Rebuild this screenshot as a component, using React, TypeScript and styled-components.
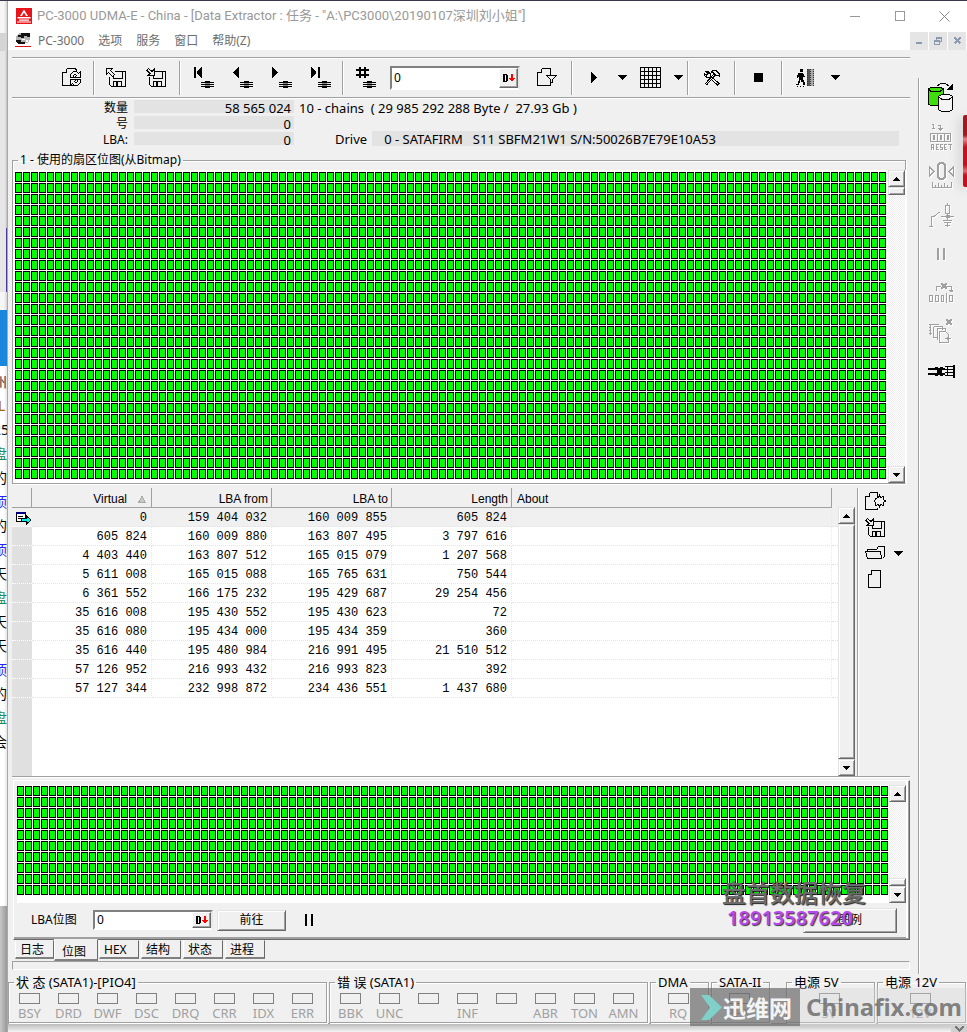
import React from "react";
import styled, { createGlobalStyle, css } from "styled-components";

const face = "#f0f0f0";
const edge = "#a0a0a0";
const dark = "#696969";

const GlobalStyle = createGlobalStyle`
  *, *::before, *::after { box-sizing: border-box; }
  body {
    margin: 0;
    background: ${face};
    color: #000;
    font: 12px/16px "Noto Sans", "Noto Sans CJK SC", sans-serif;
  }
  button, input { font: inherit; color: inherit; }
  svg { display: block; shape-rendering: crispEdges; overflow: visible; }
`;

const Desktop = styled.div`
  position: relative;
  display: flex;
  min-height: 100vh;
  overflow: hidden;
  border-top: 1px solid #38384c;
  background: linear-gradient(to top, #f4f4f4, #bcbcbc 8px, ${face} 8px);
`;

/* Window lying behind the application */
const Behind = styled.div`
  flex: none;
  width: 8px;
  overflow: hidden;
  border-right: 1px solid #a8a8a8;
  background: linear-gradient(to right, #f6f6f6 0 4px, #c9c9c9 8px);
  display: flex;
  flex-direction: column;
`;
const Stripe = styled.div<{ $h: number; $bg?: string }>`
  flex: none;
  height: ${(p) => p.$h}px;
  background: ${(p) => p.$bg || "transparent"};
`;
const Chat = styled.div`
  flex: none;
  height: 540px;
  padding-top: 4px;
  background: linear-gradient(to right, #fff 0 4px, #dcdcdc 8px);
`;
const ChatLine = styled.div<{ $c: string }>`
  height: 24px;
  margin-left: -7px;
  white-space: nowrap;
  font-size: 14px;
  line-height: 24px;
  color: ${(p) => p.$c};
`;

const Win = styled.div`
  flex: 1;
  min-width: 0;
  display: flex;
  flex-direction: column;
  align-self: flex-start;
  background: ${face};
  border-bottom: 1px solid ${edge};
`;

const TitleBar = styled.header`
  display: flex;
  align-items: center;
  height: 30px;
  padding-left: 8px;
  background: #fff;
  color: #999;
`;
const TitleText = styled.h1`
  flex: 1;
  margin: 0 0 0 5px;
  font: 400 13px/16px Roboto, "Noto Sans CJK SC", sans-serif;
  white-space: nowrap;
`;
const Caption = styled.button`
  display: grid;
  place-items: center;
  width: 45px;
  height: 28px;
  padding: 0;
  border: 0;
  background: none;
`;

const MenuBar = styled.nav`
  display: flex;
  align-items: center;
  height: 19px;
  padding-left: 7px;
  background: #fff;
  color: #6d6d6d;
`;
const MenuItem = styled.button`
  padding: 0;
  margin-left: 14px;
  border: 0;
  background: none;
  &:first-of-type { margin-left: 7px; }
`;
const MdiButtons = styled.div`
  display: flex;
  gap: 1px;
  margin: 0 1px 0 auto;
`;
const MdiButton = styled.button`
  display: grid;
  place-items: center;
  width: 18px;
  height: 18px;
  padding: 0;
  border: 0;
  background: #e5e5e5;
`;

const Body = styled.div`
  display: flex;
  gap: 8px;
`;
const Main = styled.main`
  flex: 1;
  min-width: 0;
  padding: 7px 0 0 4px;
`;

const ToolBar = styled.div`
  display: flex;
  align-items: center;
  height: 41px;
  padding-left: 40px;
  border-top: 1px solid ${edge};
  border-bottom: 1px solid ${edge};
  box-shadow: inset 0 1px #fff, 0 1px #fff;
`;
const Sep = styled.span<{ $m?: number }>`
  flex: none;
  width: 2px;
  height: 34px;
  margin: 0 ${(p) => p.$m || 1}px;
  border-left: 1px solid ${edge};
  background: #fff;
`;
const ToolGroup = styled.div<{ $pad?: number }>`
  display: flex;
  align-items: center;
  padding: 0 ${(p) => p.$pad || 0}px;
`;
const ToolButton = styled.button<{ $w?: number; $h?: number }>`
  flex: none;
  display: grid;
  place-items: center;
  width: ${(p) => p.$w || 40}px;
  height: ${(p) => p.$h || 36}px;
  padding: 0;
  border: 0;
  background: none;
`;

const Field = styled.div<{ $w: number; $h: number }>`
  display: flex;
  width: ${(p) => p.$w}px;
  height: ${(p) => p.$h}px;
  background: #fff;
  border: 2px solid;
  border-color: #808080 #e8e8e8 #fff #808080;
`;
const FieldInput = styled.input`
  flex: 1;
  min-width: 0;
  padding: 0 2px;
  border: 0;
  outline: 0;
  background: #fff;
`;
const DecButton = styled.button`
  flex: none;
  display: flex;
  align-items: center;
  justify-content: center;
  width: 19px;
  padding: 0;
  border: 1px solid;
  border-color: #fff ${dark} ${dark} #fff;
  box-shadow: inset -1px -1px ${edge};
  background: ${face};
`;

const Info = styled.div`
  display: flex;
  height: 54px;
  padding-top: 2px;
`;
const InfoList = styled.dl`
  flex: none;
  display: grid;
  grid-template-columns: 116px 160px;
  grid-auto-rows: 16px;
  column-gap: 6px;
  margin: 0;
  text-align: right;
`;
const InfoValue = styled.dd`
  height: 13px;
  margin: 0;
  padding-right: 3px;
  background: #e3e3e3;
  font-size: 13px;
`;
const InfoSide = styled.div`
  flex: 1;
  min-width: 0;
  padding: 0 11px 0 5px;
  font-size: 13px;
  white-space: pre;
`;
const DriveRow = styled.div`
  display: flex;
  gap: 5px;
  margin-top: 15px;
  padding-left: 36px;
`;
const DriveValue = styled.output`
  flex: 1;
  height: 15px;
  padding-left: 12px;
  background: #e3e3e3;
`;

const Group = styled.fieldset`
  min-width: 0;
  margin: 0;
  padding: 0;
  border: 1px solid ${edge};
  box-shadow: 1px 1px #fff, inset 1px 1px #fff;
`;
const Legend = styled.legend<{ $size?: number }>`
  margin-left: 5px;
  padding: 0 2px;
  font-size: ${(p) => p.$size || 12}px;
  white-space: nowrap;
`;
const MapGroup = styled(Group)`
  margin-right: 4px;
  border-bottom: 0;
`;
const MapRow = styled.div`
  display: flex;
  margin: 2px -1px 0 0;
  border-right: 1px solid #fff;
  border-bottom: 1px solid ${edge};
`;
const MapPane = styled.div<{ $pad: string }>`
  flex: 1;
  min-width: 0;
  padding: ${(p) => p.$pad};
  background: #fff;
`;
const Cells = styled.div<{ $rows: number }>`
  height: ${(p) => p.$rows * 11}px;
  background-color: #00ff00;
  background-size: 8px 11px;
  background-image:
    linear-gradient(to right, transparent 7px, #fff 7px),
    linear-gradient(to bottom, transparent 10px, #fff 10px),
    linear-gradient(to right, #000 1px, transparent 1px 6px, #000 6px),
    linear-gradient(to bottom, #000 1px, transparent 1px 9px, #000 9px);
`;

const raised = css`
  border: 1px solid;
  border-color: #e3e3e3 ${dark} ${dark} #e3e3e3;
  box-shadow: inset 1px 1px #fff, inset -1px -1px ${edge};
  background: ${face};
`;
const Bar = styled.div<{ $top?: number }>`
  flex: none;
  display: flex;
  flex-direction: column;
  width: 17px;
  margin-top: ${(p) => p.$top || 0}px;
  background: repeating-conic-gradient(#fff 0 25%, #ededed 0 50%) 0 0 / 2px 2px;
`;
const BarButton = styled.button`
  ${raised}
  flex: none;
  display: grid;
  place-items: center;
  width: 17px;
  height: 17px;
  padding: 0;
`;
const Thumb = styled.span<{ $full?: boolean }>`
  ${raised}
  flex: ${(p) => (p.$full ? "1" : "none")};
  height: 8px;
`;
const Track = styled.span`
  flex: 1;
`;

const TableArea = styled.section`
  display: flex;
  height: 289px;
  margin-top: 4px;
  border-bottom: 1px solid ${edge};
  box-shadow: 0 1px #fff;
`;
const TableWrap = styled.div`
  flex: 1;
  min-width: 0;
  background: linear-gradient(to right, #e0e0e0 20px, #fff 20px);
`;
const Table = styled.table`
  width: 100%;
  table-layout: fixed;
  border-collapse: separate;
  border-spacing: 0;
`;
const Th = styled.th<{ $w?: number; $left?: boolean; $end?: boolean }>`
  width: ${(p) => (p.$w ? `${p.$w}px` : "auto")};
  height: 20px;
  padding: 2px ${(p) => (p.$end ? 0 : 3)}px 0 5px;
  background: ${face};
  border-right: ${(p) => (p.$end ? 0 : 1)}px solid ${edge};
  border-bottom: 1px solid ${(p) => (p.$end ? face : edge)};
  font: 12px/16px "Liberation Sans", sans-serif;
  text-align: ${(p) => (p.$left ? "left" : "right")};
  white-space: nowrap;
`;
const SortMark = styled.span`
  display: inline-block;
  margin: 0 2px 0 11px;
`;
const Row = styled.tr<{ $on?: boolean }>`
  background: ${(p) => (p.$on ? face : "#fff")};
`;
const Td = styled.td<{ $end?: boolean }>`
  height: 19px;
  padding: 2px 4px 0 0;
  border-bottom: 1px dotted #e4e4e4;
  border-right: ${(p) => (p.$end ? 0 : 1)}px dotted #e9e9e9;
  font: 12px/16px "Liberation Mono", monospace;
  text-align: right;
  white-space: pre;
`;
const Gutter = styled.td<{ $on?: boolean }>`
  height: 19px;
  padding: 2px 0 0 4px;
  border-bottom: 1px dotted #fff;
  background: ${(p) => (p.$on ? face : "#e0e0e0")};
`;
const SideTools = styled.div`
  flex: none;
  width: 53px;
  margin-left: 2px;
  border-left: 1px solid ${edge};
  box-shadow: inset 1px 0 #fff;
`;
const SideRow = styled.div`
  display: flex;
`;

const Panel = styled.section`
  margin: 3px 0 0 1px;
  padding: 4px 3px 0;
  border: 1px solid;
  border-color: #fff ${dark} ${dark} #fff;
  box-shadow: inset -1px -1px ${edge}, inset -3px 0 #fff, inset 0 -2px ${edge};
`;
const PanelRow = styled.div`
  display: flex;
`;
const GotoRow = styled.form`
  display: flex;
  align-items: center;
  height: 36px;
  padding: 0 9px 2px 14px;
`;
const GotoLabel = styled.label`
  width: 62px;
  white-space: nowrap;
`;
const PushButton = styled.button<{ $w: number; $h: number }>`
  ${raised}
  width: ${(p) => p.$w}px;
  height: ${(p) => p.$h}px;
  margin-left: 4px;
  padding: 0;
`;
const PauseButton = styled(ToolButton)`
  margin-left: 14px;
  margin-right: auto;
`;

const Tabs = styled.div`
  display: flex;
  align-items: flex-start;
  gap: 2px;
  height: 21px;
  padding-left: 3px;
`;
const Tab = styled.button<{ $on?: boolean; $w: number }>`
  width: ${(p) => p.$w}px;
  height: ${(p) => (p.$on ? 22 : 19)}px;
  margin: ${(p) => (p.$on ? "-1px -1px 0 -2px" : "0")};
  padding: ${(p) => (p.$on ? "4px 7px 0" : "2px 4px 0")};
  border: 1px solid;
  border-color: ${face} ${dark} #808080 #fff;
  border-bottom-width: 2px;
  background: ${face};
  line-height: 14px;
  text-align: left;
  white-space: nowrap;
`;
const StatusLine = styled.div`
  height: 9px;
  border: 1px solid;
  border-color: ${edge} #fff #fff ${edge};
`;

const SideBar = styled.aside`
  flex: none;
  width: 49px;
  margin: 28px 0 -4px;
  border-left: 1px solid ${edge};
  box-shadow: inset 1px 0 #fff;
`;
const Faded = styled.span`
  filter: drop-shadow(1px 1px 0 #fff);
`;

const Footer = styled.footer`
  display: flex;
  gap: 2px;
  padding: 4px 1px 0 0;
`;
const LedGroup = styled(Group)<{ $grow: number; $gap?: boolean }>`
  flex: ${(p) => p.$grow} 1 0;
  margin-right: ${(p) => (p.$gap ? 14 : 0)}px;
`;
const LedRow = styled.div`
  display: flex;
  padding: 3px 4px 0 1px;
`;
const Led = styled.div`
  flex: 1 1 0;
  min-width: 0;
  display: flex;
  flex-direction: column;
  align-items: center;
  height: 29px;
  font-size: 13px;
  color: ${edge};
`;
const Lamp = styled.span`
  flex: none;
  width: 21px;
  height: 11px;
  margin-bottom: 1px;
  border: 1px solid #808080;
`;

/* Marks lying over the window */
const ShopMark = styled.div`
  position: absolute;
  right: 101px;
  bottom: 103px;
  text-align: center;
  pointer-events: none;
`;
const ShopName = styled.div`
  font: 500 24px/30px "Noto Sans CJK SC", sans-serif;
  color: #6c6c6c;
  text-shadow: 1px 1px 1px #222;
`;
const ShopPhone = styled.div`
  font: 600 20px/22px "Noto Sans", sans-serif;
  padding-right: 8px;
  color: #b848ee;
  text-shadow: 1px 1px 1px #333;
`;
const SiteMark = styled.div`
  position: absolute;
  right: 0;
  bottom: 6px;
  display: flex;
  align-items: center;
  height: 38px;
  pointer-events: none;
`;
const SiteBox = styled.div`
  display: flex;
  align-items: center;
  gap: 1px;
  width: 110px;
  height: 38px;
  padding-left: 11px;
  background: rgba(110, 110, 110, 0.72);
  font: 700 23px/36px "Noto Sans CJK SC", sans-serif;
  color: #f4f4f4;
  white-space: nowrap;
`;
const SiteName = styled.div`
  width: 167px;
  height: 38px;
  padding-left: 6px;
  background: rgba(215, 215, 215, 0.4);
  font: 700 24px/38px "Noto Sans", sans-serif;
  color: rgba(110, 110, 110, 0.85);
`;
const RedTab = styled.div`
  position: absolute;
  top: 114px;
  right: 0;
  width: 4px;
  height: 72px;
  border-radius: 2px 0 0 2px;
  background: linear-gradient(#9e1b20 0 20px, #e8858a 24px, #c8101c 32px 50px, #e07078 56px, #c8101c 60px);
  box-shadow: -2px 2px 12px rgba(0, 0, 0, 0.25);
`;
const CornerBox = styled.div`
  position: absolute;
  right: 0;
  bottom: 0;
  width: 16px;
  height: 7px;
  display: grid;
  place-items: center;
  background: #d0d0d0;
`;

type LineProps = {
  w: number;
  h: number;
  d?: string;
  fill?: string;
  color?: string;
  children?: React.ReactNode;
};
const Icon = ({ w, h, d, fill, color = "#000", children }: LineProps) => (
  <svg width={w} height={h} viewBox={`0 0 ${w} ${h}`} fill="none" stroke={color} aria-hidden="true">
    {d && <path d={d} />}
    {fill && <path d={fill} fill={color} stroke="none" />}
    {children}
  </svg>
);

const Caret = () => <Icon w={9} h={5} fill="M0 0h9v1h-1v1h-1v1h-1v1h-1v1h-1v-1h-1v-1h-1v-1h-1v-1h-1z" />;
const Up = () => <Icon w={7} h={4} fill="M3 0h1v1h1v1h1v1h1v1h-7v-1h1v-1h1v-1h1z" />;
const Down = () => <Icon w={7} h={4} fill="M0 0h7v1h-1v1h-1v1h-1v1h-1v-1h-1v-1h-1v-1h-1z" />;

const AppLogo = () => (
  <svg width="16" height="16" viewBox="0 0 16 16" aria-hidden="true">
    <path d="M0 0h16v16h-16z" fill="#e8141c" />
    <path
      d="M8 1.500l-4 6.500h2l2-3.600 2 3.600h2zM1.500 9h13v1.400h-13zM3 11.500h10v1.200h-10zM1 13.600h14v1h-14z"
      fill="#fff"
      shapeRendering="auto"
    />
  </svg>
);
const DiskLogo = () => (
  <svg width="16" height="15" viewBox="0 0 16 15" aria-hidden="true">
    <path d="M1 3l4-3h10v6l-2 4h-10l-2-2z" fill="#b4b4b4" />
    <path d="M6 0h9v4h-3v-1h-3v2h-3v-1h-3v-2h3zM1 7h5v2h4v2h-6l-3-2z" fill="#111" />
    <path d="M7 6h3v1h-3zM11 7h2v2h-2z" fill="#fff" />
    <path d="M0 13h16v1h-16z" fill="#e01018" />
  </svg>
);

const arrowTurn = "M8.500 9.500v-3l3-3h3l2 2 2-2v6h-6l2-2-1-1h-1l-1 1v2z";
const RefreshDoc = () => (
  <Icon w={21} h={19} d="M4.500 .5h8.500l2 2M4.500 .5v3.500h-4M.5 4v13.500h12">
    <path d={arrowTurn} fill={face} />
    <path d={arrowTurn} fill={face} transform="rotate(180 13.500 10.500)" />
  </Icon>
);
const floppy = "M8.500 3.500h11v15h-14l-2-2v-8M7.500 8v2.500h9v-7M7.500 18v-4.500h8v4.500";
const SaveOut = () => (
  <Icon w={20} h={19} d={floppy} fill="M10 14h2v4h-2z">
    <path d="M.5 .5h6l-2 2 4 4-2 2-4-4-2 2z" fill={face} />
  </Icon>
);
const SaveIn = () => (
  <Icon w={20} h={19} d={floppy} fill="M10 14h2v4h-2z">
    <path d="M2.500 .5l3.500 3 2-2v6h-6l2-2-3-3z" fill={face} />
  </Icon>
);

const chip = "M7 15h13v1h-13zM9 17h9v1h-9zM7 17h13v1h-13zM7 19h13v1h-13zM11 14h5v7h-5z";
const Nav = ({ d }: { d: string }) => (
  <Icon w={20} h={21} fill={d + chip}>
    <path d="M11 16.500h5M11 18.500h5" stroke="#888" />
  </Icon>
);
const FilterDoc = () => (
  <Icon w={20} h={19} d="M4.500 .5h9v7M4.500 .5v3.500h-4M.5 4v13.500h13v-3M9.500 7.500h10l-4 4v3h-2v-3z" />
);
const GridIcon = () => (
  <Icon
    w={21}
    h={21}
    d="M.5 .5h20v20h-20zM4.500 0v21M8.500 0v21M12.500 0v21M16.500 0v21M0 4.500h21M0 8.500h21M0 12.500h21M0 16.500h21"
  />
);
const Tools = () => (
  <svg width="16" height="15" viewBox="0 0 16 15" fill="none" stroke="#000" aria-hidden="true">
    <path d="M1 14l8.500-9.500M2.500 15l8.500-9.500M7 2.500l2-2h3l3.500 3.500v2.500l-2-1.500h-2l-3-3z" />
    <path d="M.5 3.500v2l2 1.500h2l9 8 1.500-1.500-9-8v-2l-2-2h-2l2 2-1.500 1.500z" />
  </svg>
);
const Walker = () => (
  <svg width="19" height="18" viewBox="0 0 19 18" aria-hidden="true">
    <path d="M4 0h3v3h-3zM3 4h4v1h1v2h1v1h-2v3h1v2h1v3h-2v-3h-2v-2h-1v3h-1v2h-3v-1h2v-3h1v-4h-1v1h-1v-3h1v-2h1z" />
    <path d="M1 17h1v1h-1zM4 17h1v1h-1zM7 17h1v1h-1z" />
    <path d="M11 0h3v17h-3z" fill="#555" />
    <path d="M14 0h4v17h-4z" fill="#a8a8a8" />
    <path d="M11.500 0v17M14.500 0v17M17.500 0v17" stroke="#333" strokeDasharray="1 1" />
  </svg>
);
const DecMark = () => (
  <svg width="12" height="8" viewBox="0 0 12 8" aria-hidden="true">
    <path d="M0 0h4v1h1v6h-1v1h-4zM2 1v6h1v-6z" fillRule="evenodd" />
    <path d="M8 0h2v4h2v1h-1v1h-1v1h-2v-1h-1v-1h-1v-1h2z" fill="#f00" />
  </svg>
);

const Cylinders = () => (
  <svg width="26" height="31" viewBox="0 0 26 31" stroke="#000" aria-hidden="true">
    <path d="M.5 7l2-1.500h10l3 1.500v15l-3 1.500h-10l-2-1.500z" fill="#3fdd0c" />
    <path d="M.5 7l2 2h10l3-2" fill="none" />
    <path d="M10.500 14.500l3-2h8l3 2v13l-3 2h-8l-3-2z" fill="#f4f4f4" />
    <path d="M10.500 15l3 2h8l3-2M9.500 4l3-2.500h5l4 3" fill="none" />
    <path d="M25 1v7h-7z" fill="#000" stroke="none" />
  </svg>
);
const Reset = () => (
  <Icon
    w={22}
    h={27}
    color={edge}
    d="M3.500 5v-4.500M3 1.500h-1M2 5.500h3M8 2.500h2.500v5M8 5.500h5M9 6.500h3M.5 10.500h20.500M.5 18.500h20.500M.5 10v9M7.500 10v9M14.500 10v9M20.500 10v9M3.500 12.500h1v4h-1zM10.500 12.500h1v4h-1zM17.500 12.500h1v4h-1zM1.500 27v-5.500h2v2.500h-2M3.500 24v3M8.500 21.500h-2.500v5h2.500M6 24.500h2M12.500 21.500h-2v2.500h2v2.500h-2.500M17 21.500h-2.500v5h2.500M14 24.500h2M18 21.500h4M20.500 21v6"
  />
);
const ZeroRuler = () => (
  <Icon
    w={25}
    h={27}
    color={edge}
    d="M.5 5v9l4.500-4.500zM24.500 5v9l-4.500-4.500zM3.500 20v5.500h19v-5.500M6.500 23v2M9.500 21v4M12.500 23v2M15.500 21v4M18.500 23v2"
  >
    <path d="M9 3l2-2h3l2 2v12l-2 2h-3l-2-2z" strokeWidth="2" />
  </Icon>
);
const Circuit = () => (
  <Icon
    w={25}
    h={24}
    color={edge}
    d="M0 23.500h4M2.500 23v-10h3l5-4M12 13.500h13M18.500 0v2M16.500 2.500h4v8h-4zM18.500 11v7M14 17.500h9M15 19.500h7M18.500 19v5M16 22.500h5"
    fill="M17 12h4v3h-4z"
  />
);
const PauseMark = ({ color = "#000", w = 8, h = 12 }: { color?: string; w?: number; h?: number }) => (
  <Icon w={w} h={h} color={color} fill={`M0 0h2v${h}h-2zM${w - 2} 0h2v${h}h-2z`} />
);
const Blocks = () => (
  <Icon
    w={24}
    h={20}
    color={edge}
    d="M7.500 8v-4.500h4M17 3.500h5v4M20 7.500h4M21 8.500h3M.5 12.500h3v6h-3zM6.500 12.500h3v6h-3zM12.500 12.500h2v6h-2zM17.500 10v10M20.500 12.500h3v6h-3z"
    fill="M12 0h2v1h2v-1h2v2h-1v2h1v2h-2v-1h-2v1h-2v-2h1v-2h-1z"
  />
);
const Copies = () => (
  <Icon
    w={24}
    h={25}
    color={edge}
    d="M0 5.500h10M1.500 5v11M0 8.500h2M0 11.500h2M0 14.500h3M4.500 8v10h3M4.500 7.500h9v3M8.500 10v10.500M8 9.500h8l1 2M10.500 12.500h6l3 3v7.500h-9zM16 19.500h6"
    fill="M17 0h2v1h2v-1h2v2h-1v2h1v2h-2v-1h-2v1h-2v-2h1v-2h-1zM18 18h2v3h-2z"
  />
);
const Plug = () => (
  <Icon
    w={27}
    h={14}
    d="M17 2.500h8M17 11.500h8M17 5.500h8M17 8.500h8M19.500 3v9"
    fill="M0 4h17v2h-17zM0 9h17v2h-17zM7 3h3v1h-3zM12 3h3v1h-3zM7 11h3v1h-3zM12 11h3v1h-3zM9 6h5v3h-5zM25 1h2v13h-2z"
  />
);
const NewDocGear = () => (
  <Icon
    w={20}
    h={18}
    d="M4.500 .5h8v4M4.500 .5v3.500h-4M.5 4v13.500h12v-2M10.500 6.500l3-1 1-2 1 2 3-1 0 3 2 1.500-2 1.500 0 3-3-1-1 2-1-2-3 1v-3l-1-1.500 1-1.500z"
  />
);
const Folder = () => (
  <Icon w={20} h={14} d="M2.500 5v-1.500h9l2-3h6v10l-2 2M.5 5.500h15l1 7h-14z" />
);
const BlankDoc = () => <Icon w={14} h={18} d="M3.500 .5h9v17h-12v-13.500h3z" />;
const RowMark = () => (
  <svg width="16" height="13" viewBox="0 0 16 13" aria-hidden="true">
    <path d="M.5 .5h9v9h-9z" fill="#fff" stroke="#000" />
    <path d="M0 0h10v2h-10z" fill="#000080" />
    <path d="M2 4h5v1h-5zM2 6h3v1h-3z" />
    <path d="M5.500 6.500h5v-2.500l4.500 4-4.500 4v-2.500h-5z" fill="#00f0f0" stroke="#000" />
  </svg>
);

const Scroll = ({ mode, top }: { mode: "top" | "bottom" | "full"; top?: number }) => (
  <Bar $top={top}>
    <BarButton type="button" aria-label="Up"><Up /></BarButton>
    {mode === "full" ? <Thumb $full /> : null}
    {mode === "top" ? <Thumb /> : null}
    {mode !== "full" ? <Track /> : null}
    {mode === "bottom" ? <Thumb /> : null}
    <BarButton type="button" aria-label="Down"><Down /></BarButton>
  </Bar>
);

const Leds = ({ title, names, grow, gap }: { title: string; names: string[]; grow: number; gap?: boolean }) => (
  <LedGroup $grow={grow} $gap={gap}>
    <Legend $size={13}>{title}</Legend>
    <LedRow>
      {names.map((n, i) => (
        <Led key={i}><Lamp />{n}</Led>
      ))}
    </LedRow>
  </LedGroup>
);

const rows = [
  ["0", "159 404 032", "160 009 855", "605 824"],
  ["605 824", "160 009 880", "163 807 495", "3 797 616"],
  ["4 403 440", "163 807 512", "165 015 079", "1 207 568"],
  ["5 611 008", "165 015 088", "165 765 631", "750 544"],
  ["6 361 552", "166 175 232", "195 429 687", "29 254 456"],
  ["35 616 008", "195 430 552", "195 430 623", "72"],
  ["35 616 080", "195 434 000", "195 434 359", "360"],
  ["35 616 440", "195 480 984", "216 991 495", "21 510 512"],
  ["57 126 952", "216 993 432", "216 993 823", "392"],
  ["57 127 344", "232 998 872", "234 436 551", "1 437 680"],
];

const chat: [string, string][] = [
  ["州", "#234"], ["“L", "#a60"], ["25", "#000"], ["盘", "#1a8a5a"], ["的", "#000"],
  ["顷", "#22f"], ["的", "#000"], ["顷", "#22f"], ["天", "#000"], ["盘", "#1a8a5a"],
  ["天", "#000"], ["天", "#000"], ["顷", "#22f"], ["的", "#000"], ["盘", "#1a8a5a"], ["会", "#000"],
];

const navs = [
  ["First", "M0 0h2v11h-2zM8 0v11h-1v-1h-1v-1h-1v-1h-1v-1h-1v-3h1v-1h1v-1h1v-1h1v-1z"],
  ["Previous", "M6 0v11h-1v-1h-1v-1h-1v-1h-1v-1h-1v-1h-1v-1h1v-1h1v-1h1v-1h1v-1h1v-1z"],
  ["Next", "M0 0v11h1v-1h1v-1h1v-1h1v-1h1v-1h1v-1h-1v-1h-1v-1h-1v-1h-1v-1h-1v-1z"],
  ["Last", "M0 0v11h1v-1h1v-1h1v-1h1v-1h1v-3h-1v-1h-1v-1h-1v-1h-1v-1zM7 0h2v11h-2z"],
];
const hash = "M3 0h2v11h-2zM8 0h2v11h-2zM0 2h13v2h-13zM0 7h13v2h-13z";

const sideIcons: [string, React.ReactNode, boolean][] = [
  ["Power", <Cylinders />, false],
  ["Reset", <Reset />, true],
  ["Recalibrate", <ZeroRuler />, true],
  ["Circuit", <Circuit />, true],
  ["Pause", <PauseMark color={edge} />, true],
  ["Blocks", <Blocks />, true],
  ["Copies", <Copies />, true],
  ["Connector", <Plug />, false],
];

const tabs: [string, number][] = [["日志", 39], ["位图", 44], ["HEX", 40], ["结构", 40], ["状态", 40], ["进程", 40]];

export default function App() {
  return (
    <Desktop>
      <GlobalStyle />
      <Behind aria-hidden="true">
        <Stripe $h={32} />
        <Stripe $h={18} $bg="#d4d4d4" />
        <Stripe $h={177} $bg="linear-gradient(to right, #e6e6e6 0 5px, #aaa 8px)" />
        <Stripe $h={64} $bg="linear-gradient(to right, #e6e6e6 0 6px, #4a3a9a 6px)" />
        <Stripe $h={18} />
        <Stripe $h={56} $bg="#1a86dc" />
        <Chat>
          {chat.map(([t, c], i) => <ChatLine key={i} $c={c}>{t}</ChatLine>)}
        </Chat>
        <Stripe $h={126} $bg="linear-gradient(to right, #c8c8c8, #999)" />
      </Behind>

      <Win>
        <TitleBar>
          <AppLogo />
          <TitleText>PC-3000 UDMA-E - China - [Data Extractor : 任务 - "A:\PC3000\20190107深圳刘小姐"]</TitleText>
          <Caption type="button" aria-label="Minimize"><Icon w={10} h={1} color="#999" d="M0 .5h10" /></Caption>
          <Caption type="button" aria-label="Maximize"><Icon w={10} h={10} color="#999" d="M.5 .5h9v9h-9z" /></Caption>
          <Caption type="button" aria-label="Close">
            <Icon w={11} h={11} color="#888"><path shapeRendering="auto" d="M.5 .5l10 10M10.500 .5l-10 10" /></Icon>
          </Caption>
        </TitleBar>
        <MenuBar>
          <DiskLogo />
          {["PC-3000", "选项", "服务", "窗口", "帮助(Z)"].map((m) => <MenuItem key={m} type="button">{m}</MenuItem>)}
          <MdiButtons>
            <MdiButton type="button" aria-label="Minimize document"><Icon w={6} h={6} color="#8a9bb0" fill="M0 4h6v2h-6z" /></MdiButton>
            <MdiButton type="button" aria-label="Restore document">
              <Icon w={8} h={8} color="#8a9bb0" d="M2.500 3v-2.500h5v4h-2M.5 3.500h5v4h-5zM.5 4.500h5M2.500 1.500h5" />
            </MdiButton>
            <MdiButton type="button" aria-label="Close document">
              <Icon w={7} h={7} color="#8a9bb0"><path d="M.5 .5l6 6M6.500 .5l-6 6" strokeWidth="2" /></Icon>
            </MdiButton>
          </MdiButtons>
        </MenuBar>

        <Body>
          <Main>
            <ToolBar>
              <ToolButton aria-label="Refresh"><RefreshDoc /></ToolButton>
              <Sep />
              <ToolButton aria-label="Export"><SaveOut /></ToolButton>
              <ToolButton aria-label="Save"><SaveIn /></ToolButton>
              <Sep $m={3} />
              {navs.map(([n, d]) => <ToolButton key={n} $w={39} aria-label={n}><Nav d={d} /></ToolButton>)}
              <Sep $m={2} />
              <ToolButton aria-label="Go to number"><Nav d={hash} /></ToolButton>
              <ToolGroup $pad={4}>
                <Field $w={130} $h={24}>
                  <FieldInput aria-label="Number" defaultValue="0" />
                  <DecButton type="button" aria-label="Decimal"><DecMark /></DecButton>
                </Field>
              </ToolGroup>
              <ToolGroup $pad={3}>
                <ToolButton aria-label="Filter"><FilterDoc /></ToolButton>
              </ToolGroup>
              <Sep />
              <ToolButton aria-label="Start"><Icon w={7} h={11} fill="M0 0h1v1h1v1h1v1h1v1h1v1h1v1h-1v1h-1v1h-1v1h-1v1h-1v1h-1z" /></ToolButton>
              <ToolButton $w={16} aria-label="Start options"><Caret /></ToolButton>
              <ToolButton aria-label="Map"><GridIcon /></ToolButton>
              <ToolButton $w={16} aria-label="Map options"><Caret /></ToolButton>
              <Sep />
              <ToolButton $w={43} aria-label="Tools"><Tools /></ToolButton>
              <Sep />
              <ToolButton $w={43} aria-label="Stop"><Icon w={9} h={9} fill="M0 0h9v9h-9z" /></ToolButton>
              <Sep />
              <ToolButton $w={43} aria-label="Exit"><Walker /></ToolButton>
              <ToolButton $w={16} aria-label="Exit options"><Caret /></ToolButton>
            </ToolBar>

            <Info>
              <InfoList>
                <dt>数量</dt><InfoValue>58 565 024</InfoValue>
                <dt>号</dt><InfoValue>0</InfoValue>
                <dt>LBA:</dt><InfoValue>0</InfoValue>
              </InfoList>
              <InfoSide>
                {"10 - chains  ( 29 985 292 288 Byte /  27.93 Gb )"}
                <DriveRow>
                  <span>Drive</span>
                  <DriveValue>{"0 - SATAFIRM   S11 SBFM21W1 S/N:50026B7E79E10A53"}</DriveValue>
                </DriveRow>
              </InfoSide>
            </Info>

            <MapGroup>
              <Legend>1 - 使用的扇区位图(从Bitmap)</Legend>
              <MapRow>
                <MapPane $pad="2px 1px 3px 2px"><Cells $rows={28} /></MapPane>
                <Scroll mode="top" />
              </MapRow>
            </MapGroup>

            <TableArea>
              <TableWrap>
                <Table>
                  <thead>
                    <tr>
                      <Th $w={20} aria-label="Marker" />
                      <Th $w={120}>Virtual<SortMark><Icon w={8} h={7}><path d="M.5 6.500h7l-3.500-6z" fill="#c8c8c8" stroke="#aaa" /></Icon></SortMark></Th>
                      <Th $w={120}>LBA from</Th>
                      <Th $w={120}>LBA to</Th>
                      <Th $w={120}>Length</Th>
                      <Th $left>About</Th>
                      <Th $w={6} $end aria-hidden="true" />
                    </tr>
                  </thead>
                  <tbody>
                    {rows.map((r, i) => (
                      <Row key={i} $on={i === 0}>
                        <Gutter $on={i === 0}>{i === 0 && <RowMark />}</Gutter>
                        {r.map((c, j) => <Td key={j}>{c}</Td>)}
                        <Td />
                        <Td $end />
                      </Row>
                    ))}
                  </tbody>
                </Table>
              </TableWrap>
              <Scroll mode="full" top={19} />
              <SideTools>
                <ToolButton $w={34} $h={26} aria-label="New chain"><NewDocGear /></ToolButton>
                <ToolButton $w={34} $h={26} aria-label="Save chains"><SaveIn /></ToolButton>
                <SideRow>
                  <ToolButton $w={34} $h={26} aria-label="Open"><Folder /></ToolButton>
                  <ToolButton $w={12} $h={26} aria-label="Open options"><Caret /></ToolButton>
                </SideRow>
                <ToolButton $w={34} $h={26} aria-label="Blank"><BlankDoc /></ToolButton>
              </SideTools>
            </TableArea>

            <Panel>
              <PanelRow>
                <MapPane $pad="1px 0 7px"><Cells $rows={10} /></MapPane>
                <Scroll mode="bottom" />
              </PanelRow>
              <GotoRow onSubmit={(e) => e.preventDefault()}>
                <GotoLabel htmlFor="lba">LBA位图</GotoLabel>
                <Field $w={120} $h={20}>
                  <FieldInput id="lba" defaultValue="0" />
                  <DecButton type="button" aria-label="Decimal"><DecMark /></DecButton>
                </Field>
                <PushButton $w={69} $h={21}>前往</PushButton>
                <PauseButton type="button" $w={18} $h={20} aria-label="Pause"><PauseMark /></PauseButton>
                <PushButton type="button" $w={94} $h={25}>图例</PushButton>
              </GotoRow>
            </Panel>
            <Tabs role="tablist">
              {tabs.map(([t, w], i) => (
                <Tab key={t} type="button" role="tab" aria-selected={i === 1} $on={i === 1} $w={w}>{t}</Tab>
              ))}
            </Tabs>
            <StatusLine />
          </Main>

          <SideBar>
            {sideIcons.map(([n, icon, off]) => (
              <ToolButton key={n} type="button" $w={44} $h={39} aria-label={n}>
                {off ? <Faded>{icon}</Faded> : icon}
              </ToolButton>
            ))}
          </SideBar>
        </Body>

        <Footer>
          <Leds title="状 态 (SATA1)-[PIO4]" grow={317} names={["BSY", "DRD", "DWF", "DSC", "DRQ", "CRR", "IDX", "ERR"]} />
          <Leds title="错 误 (SATA1)" grow={317} names={["BBK", "UNC", "", "INF", "", "ABR", "TON", "AMN"]} />
          <Leds title="DMA" grow={57} names={["RQ"]} />
          <Leds title="SATA-II" grow={57} names={["PHY"]} gap />
          <Leds title="电源 5V" grow={87} names={["5V"]} />
          <Leds title="电源 12V" grow={87} names={["12V"]} />
        </Footer>
      </Win>

      <RedTab />
      <CornerBox><Icon w={9} h={5}><path d="M.5 .5l4 4 4-4" stroke="#777" strokeWidth="2" /></Icon></CornerBox>
      <ShopMark>
        <ShopName>盘首数据恢复</ShopName>
        <ShopPhone>18913587620</ShopPhone>
      </ShopMark>
      <SiteMark>
        <SiteBox>
          <svg width="21" height="25" viewBox="0 0 21 25" aria-hidden="true"><path shapeRendering="auto" d="M0 0h8l13 12.500-13 12.500h-8l9-12.500z" fill="#7fd0c8" /></svg>
          迅维网
        </SiteBox>
        <SiteName>Chinafix.com</SiteName>
      </SiteMark>
    </Desktop>
  );
}
